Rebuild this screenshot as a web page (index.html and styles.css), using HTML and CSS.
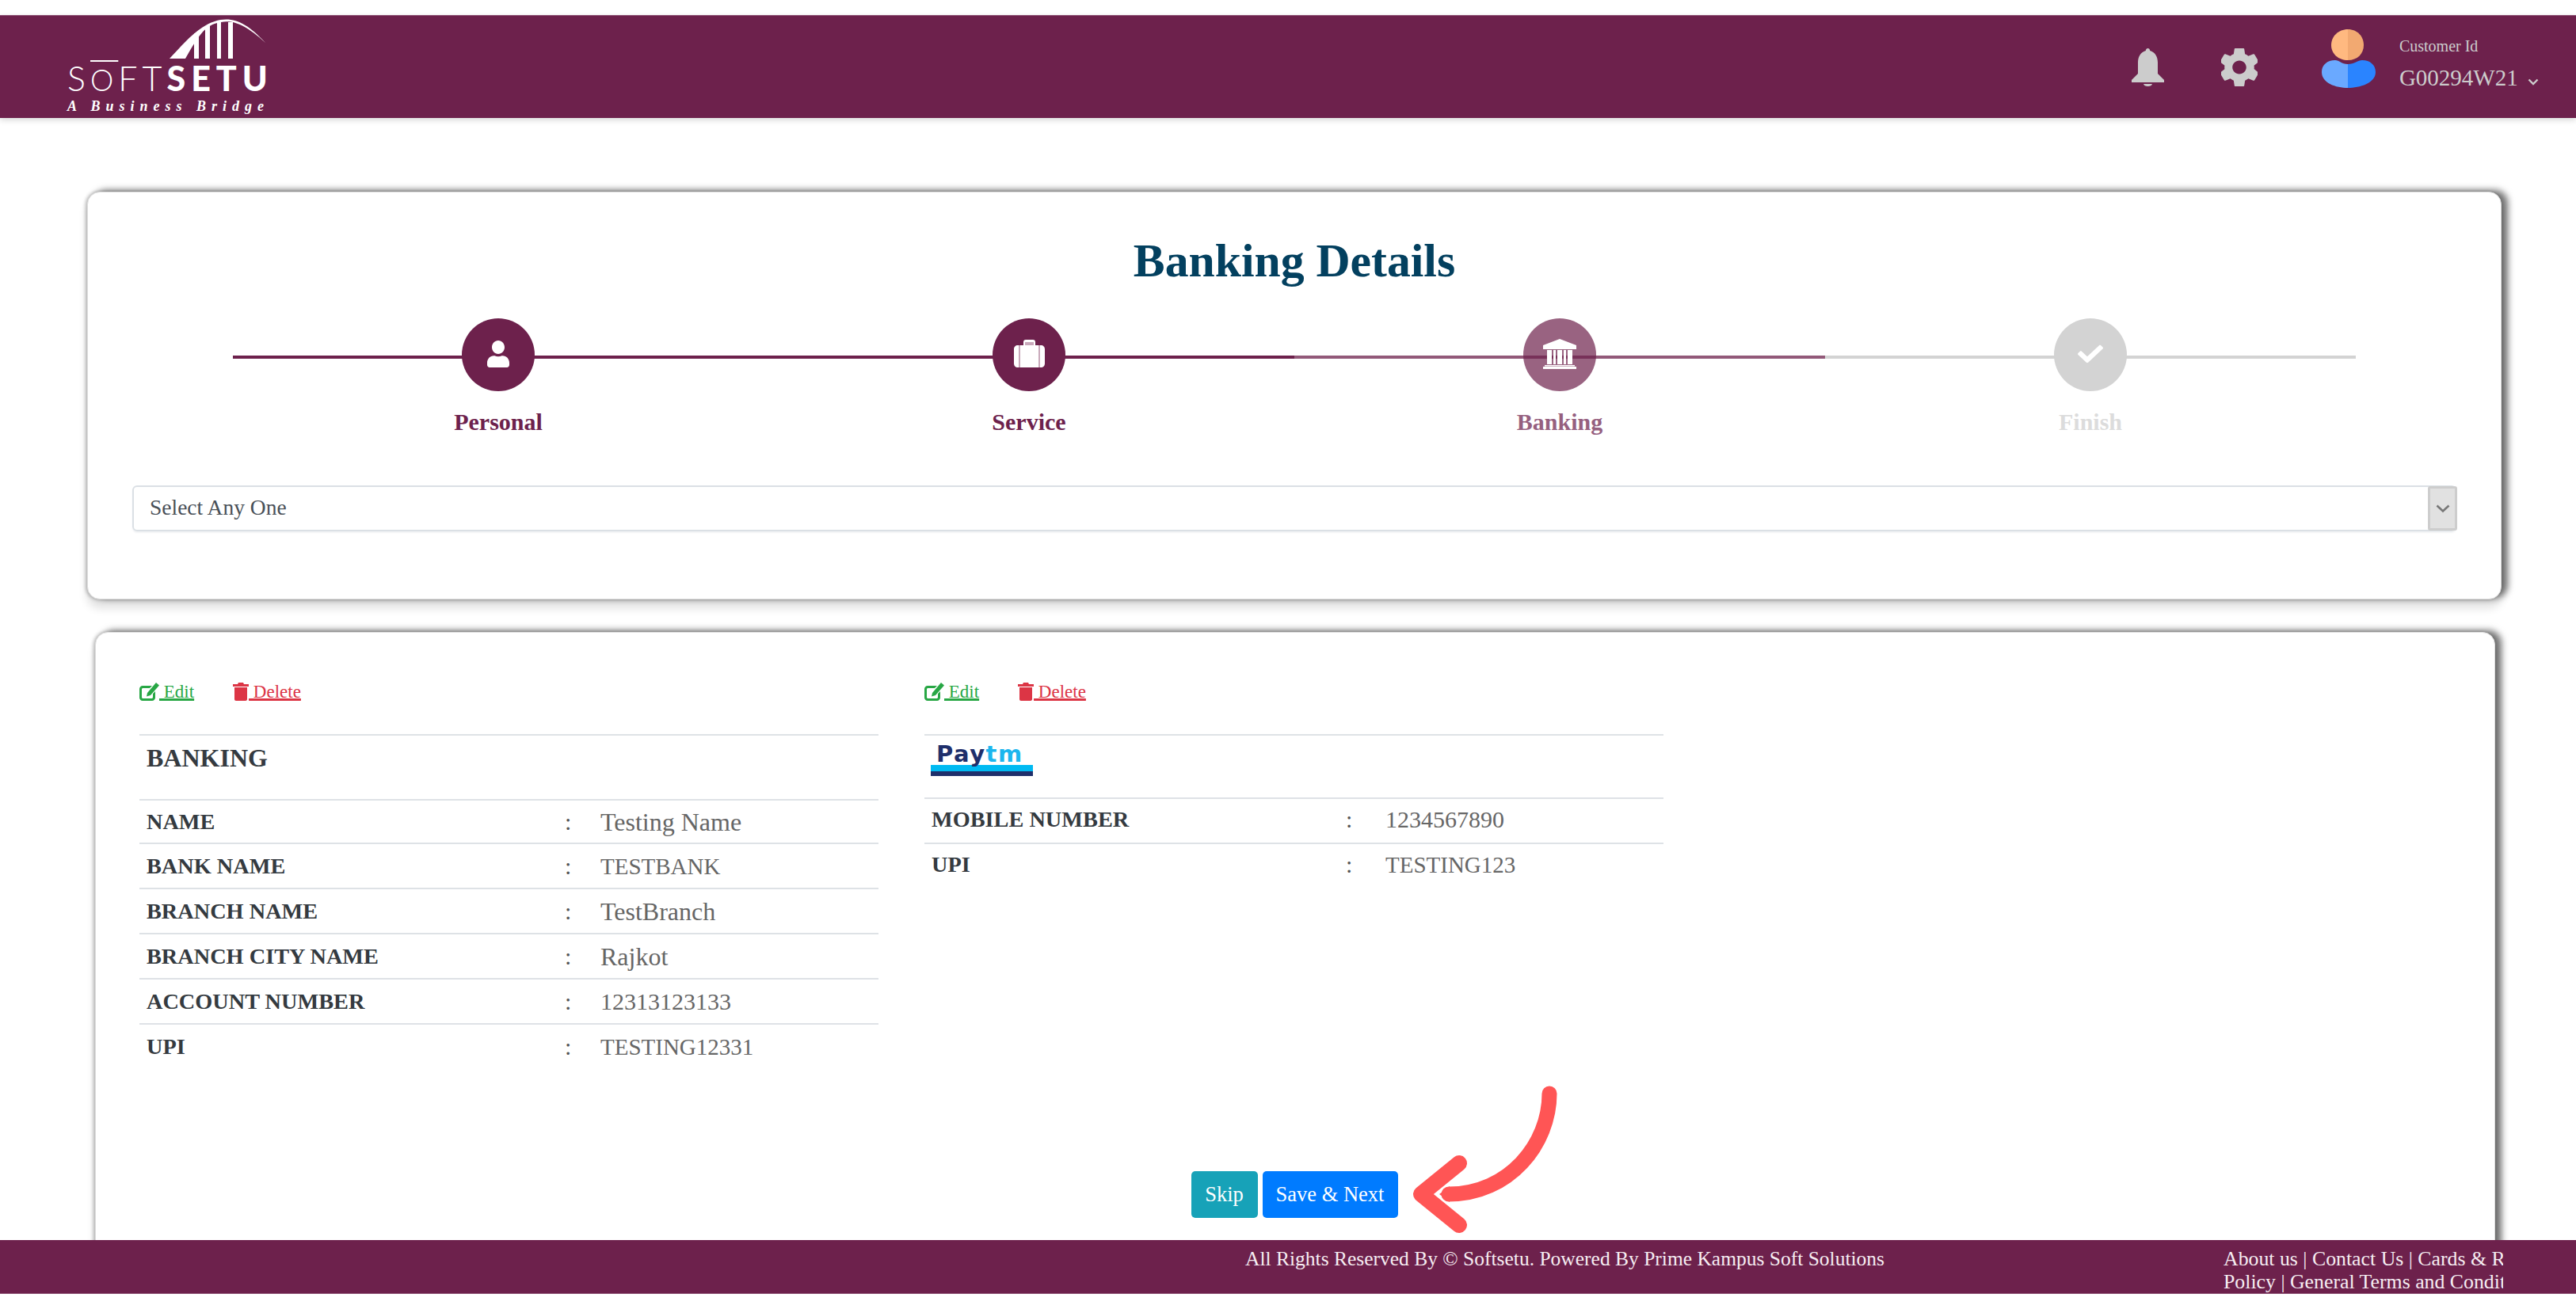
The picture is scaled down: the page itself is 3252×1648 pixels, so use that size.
FILE: index.html
```html
<!DOCTYPE html>
<html lang="en">
<head>
    <meta charset="UTF-8">
    <title>Banking Details</title>
    <link rel="stylesheet" href="styles.css">
</head>
<body>
    <header class="topbar">
        <div class="logo">
            <svg class="logo-arch" viewBox="0 0 130 54" width="130" height="54">
                <path d="M3 52 C20 34 38 12 60 5 C82 -2 100 6 124 32 C100 10 84 3 68 6 C48 9 40 22 23 52 Z"/>
                <rect x="34" y="20" width="6" height="32"/>
                <rect x="48" y="11" width="6" height="41"/>
                <rect x="63" y="6" width="5" height="46"/>
                <rect x="77" y="6" width="6" height="46"/>
            </svg>
            <div class="logo-name"><span class="logo-soft">S<span class="logo-o">O</span>FT</span><span class="logo-setu">SETU</span></div>
            <div class="logo-tag">A Business Bridge</div>
        </div>
        <div class="topbar-right">
            <svg class="bell" viewBox="0 0 41 48" width="41" height="48">
                <path d="M20.5 0c1.5 0 2.5 1.2 2.7 3C30 5 33 11 33 18v14l8 8v3H0v-3l8-8V18C8 11 11 5 17.8 3 18 1.2 19 0 20.5 0z"/>
                <path d="M15 45h11c-.5 2-2.5 3-5.5 3s-5-1-5.5-3z"/>
            </svg>
            <svg class="gear" viewBox="2.8 2 18.4 20" width="46" height="48" preserveAspectRatio="none">
                <path d="M19.43 12.98c.04-.32.07-.64.07-.98s-.03-.66-.07-.98l2.11-1.65c.19-.15.24-.42.12-.64l-2-3.46c-.12-.22-.39-.3-.61-.22l-2.49 1c-.52-.4-1.08-.73-1.69-.98l-.38-2.65C14.46 2.18 14.25 2 14 2h-4c-.25 0-.46.18-.49.42l-.38 2.65c-.61.25-1.17.59-1.69.98l-2.49-1c-.23-.09-.49 0-.61.22l-2 3.46c-.13.22-.07.49.12.64l2.11 1.65c-.04.32-.07.65-.07.98s.03.66.07.98l-2.11 1.65c-.19.15-.24.42-.12.64l2 3.46c.12.22.39.3.61.22l2.49-1c.52.4 1.08.73 1.69.98l.38 2.65c.03.24.24.42.49.42h4c.25 0 .46-.18.49-.42l.38-2.65c.61-.25 1.17-.59 1.69-.98l2.49 1c.23.09.49 0 .61-.22l2-3.46c.12-.22.07-.49-.12-.64l-2.01-1.65zM12 15.5c-1.93 0-3.5-1.57-3.5-3.5s1.57-3.5 3.5-3.5 3.5 1.57 3.5 3.5-1.57 3.5-3.5 3.5z"/>
            </svg>
            <svg class="avatar" viewBox="0 0 68 74" width="68" height="74">
                <path fill="#ffb980" d="M33 0C21 0 12 9 12 20s9 19 21 19z"/>
                <path fill="#f2a971" d="M33 0c12 0 20 9 20 20s-8 19-20 19z"/>
                <path fill="#6aa9ff" d="M33 74C18 74 0 68 0 54 0 45 7 39 17 39c5 0 8 5 16 5z"/>
                <path fill="#2a84ff" d="M33 74c15 0 35-6 35-20 0-9-7-15-17-15-5 0-10 5-18 5z"/>
            </svg>
            <div class="customer">
                <div class="customer-label">Customer Id</div>
                <div class="customer-id">G00294W21
                    <svg class="customer-caret" viewBox="0 0 14 9" width="14" height="9"><path d="M1.5 1.5L7 7l5.500-5.500" fill="none" stroke="#ccc" stroke-width="2.4"/></svg>
                </div>
            </div>
        </div>
    </header>

    <main class="content">
        <section class="card card-top">
            <h1 class="page-title">Banking Details</h1>
            <div class="steps">
                <div class="step step-done">
                    <div class="step-circle">
                        <svg viewBox="0 0 448 512" width="28" height="34" preserveAspectRatio="none"><path d="M224 256c70.7 0 128-57.3 128-128S294.7 0 224 0 96 57.3 96 128s57.3 128 128 128zm89.6 32h-16.7c-22.2 10.2-46.9 16-72.9 16s-50.6-5.8-72.9-16h-16.7C60.2 288 0 348.2 0 422.4V464c0 26.5 21.5 48 48 48h352c26.5 0 48-21.5 48-48v-41.6c0-74.2-60.2-134.4-134.4-134.4z"/></svg>
                    </div>
                    <div class="step-name">Personal</div>
                </div>
                <div class="step step-done">
                    <div class="step-circle">
                        <svg viewBox="0 0 39 35" width="39" height="35">
                            <path d="M15 0h9c2 0 3 1 3 3v4h7c3 0 5 2 5 5v18c0 3-2 5-5 5H5c-3 0-5-2-5-5V12c0-3 2-5 5-5h7V3c0-2 1-3 3-3z"/>
                            <path fill="#c9a9bb" d="M14 3h11v4H14zM6 7h2v28H6zm25 0h2v28h-2z"/>
                        </svg>
                    </div>
                    <div class="step-name">Service</div>
                </div>
                <div class="step step-active">
                    <div class="step-circle">
                        <svg viewBox="0 0 42 38" width="42" height="38"><path d="M21 0l21 8v5H0V8zM5 14h6v18H5zm8 0h3v18h-3zm5 0h6v18h-6zm8 0h3v18h-3zm5 0h6v18h-6zM2 33h38v1.500H2zM0 35h42v3H0z"/></svg>
                    </div>
                    <div class="step-name">Banking</div>
                </div>
                <div class="step step-todo">
                    <div class="step-circle">
                        <svg viewBox="0 0 512 512" width="32" height="30" preserveAspectRatio="none"><path d="M173.898 439.404l-166.4-166.4c-9.997-9.997-9.997-26.206 0-36.204l36.203-36.204c9.997-9.998 26.207-9.998 36.204 0L192 312.69 432.095 72.596c9.997-9.997 26.207-9.997 36.204 0l36.203 36.204c9.997 9.997 9.997 26.206 0 36.204l-294.4 294.401c-9.998 9.997-26.207 9.997-36.204-.001z"/></svg>
                    </div>
                    <div class="step-name">Finish</div>
                </div>
            </div>
            <div class="select-box">
                <span class="select-text">Select Any One</span>
                <span class="select-arrow">
                    <svg viewBox="0 0 18 11" width="18" height="11"><path d="M1.5 1.5L9 8.500l7.500-7" fill="none" stroke="#777" stroke-width="2.6"/></svg>
                </span>
            </div>
        </section>

        <section class="card card-list">
            <div class="accounts">
                <div class="account">
                    <div class="account-actions">
                        <a class="link-edit" href="#">
                            <svg viewBox="0 0 25 23" width="25" height="23"><path d="M4 4h12l-3 3H4.500C3.700 7 3 7.700 3 8.500v10c0 .8.700 1.500 1.500 1.500h11c.8 0 1.500-.7 1.500-1.500V14l3-3v8c0 2.200-1.800 4-4 4H4c-2.200 0-4-1.800-4-4V8c0-2.200 1.800-4 4-4zm17-4l4 3.500L14 16l-5 1.500L10 13z"/></svg><span class="link-text"> Edit</span>
                        </a>
                        <a class="link-delete" href="#">
                            <svg viewBox="0 0 20 23" width="20" height="23"><path d="M7 0h6l1 2h6v3H0V2h6zM2 6h16v15c0 1.200-.8 2-2 2H4c-1.200 0-2-.8-2-2z"/></svg><span class="link-text"> Delete</span>
                        </a>
                    </div>
                    <div class="detail-head">BANKING</div>
                    <div class="detail-row"><span class="detail-key">NAME</span><span class="detail-colon">:</span><span class="detail-val val-mixed">Testing Name</span></div>
                    <div class="detail-row"><span class="detail-key">BANK NAME</span><span class="detail-colon">:</span><span class="detail-val val-caps">TESTBANK</span></div>
                    <div class="detail-row"><span class="detail-key">BRANCH NAME</span><span class="detail-colon">:</span><span class="detail-val val-mixed">TestBranch</span></div>
                    <div class="detail-row"><span class="detail-key">BRANCH CITY NAME</span><span class="detail-colon">:</span><span class="detail-val val-mixed">Rajkot</span></div>
                    <div class="detail-row"><span class="detail-key">ACCOUNT NUMBER</span><span class="detail-colon">:</span><span class="detail-val">12313123133</span></div>
                    <div class="detail-row"><span class="detail-key">UPI</span><span class="detail-colon">:</span><span class="detail-val val-caps">TESTING12331</span></div>
                </div>
                <div class="account account-paytm">
                    <div class="account-actions">
                        <a class="link-edit" href="#">
                            <svg viewBox="0 0 25 23" width="25" height="23"><path d="M4 4h12l-3 3H4.500C3.700 7 3 7.700 3 8.500v10c0 .8.700 1.500 1.500 1.500h11c.8 0 1.500-.7 1.500-1.500V14l3-3v8c0 2.200-1.800 4-4 4H4c-2.200 0-4-1.800-4-4V8c0-2.200 1.800-4 4-4zm17-4l4 3.500L14 16l-5 1.500L10 13z"/></svg><span class="link-text"> Edit</span>
                        </a>
                        <a class="link-delete" href="#">
                            <svg viewBox="0 0 20 23" width="20" height="23"><path d="M7 0h6l1 2h6v3H0V2h6zM2 6h16v15c0 1.200-.8 2-2 2H4c-1.200 0-2-.8-2-2z"/></svg><span class="link-text"> Delete</span>
                        </a>
                    </div>
                    <div class="detail-head">
                        <div class="paytm">
                            <div class="paytm-word">Pay<span class="paytm-tm">tm</span></div>
                            <div class="paytm-bar-top"></div>
                            <div class="paytm-bar-bottom"></div>
                        </div>
                    </div>
                    <div class="detail-row"><span class="detail-key">MOBILE NUMBER</span><span class="detail-colon">:</span><span class="detail-val">1234567890</span></div>
                    <div class="detail-row"><span class="detail-key">UPI</span><span class="detail-colon">:</span><span class="detail-val val-caps">TESTING123</span></div>
                </div>
            </div>
            <div class="form-buttons">
                <div class="form-buttons-inner">
                    <button class="btn btn-skip">Skip</button>
                    <button class="btn btn-save">Save &amp; Next</button>
                    <svg class="pointer" viewBox="1770 1365 200 195" width="200" height="195">
                        <path d="M1956 1381C1956 1445 1905 1508 1829 1508" fill="none" stroke="#ff5555" stroke-width="19" stroke-linecap="round"/>
                        <path d="M1817 1508l13-10v20z" fill="#ff5555"/>
                        <path d="M1842 1469L1794 1508L1842 1547" fill="none" stroke="#ff5555" stroke-width="20" stroke-linecap="round" stroke-linejoin="round"/>
                    </svg>
                </div>
            </div>
        </section>
    </main>

    <footer class="footer">
        <div class="footer-copy">All Rights Reserved By © Softsetu. Powered By Prime Kampus Soft Solutions</div>
        <div class="footer-links">
            <div>About us | Contact Us | Cards &amp; Refund</div>
            <div>Policy | General Terms and Conditions</div>
        </div>
    </footer>
</body>
</html>
```

FILE: styles.css
```css
*{
    padding: 0;
    margin: 0;
    box-sizing: border-box;
}
html,body{
    height: 1648px;
    overflow: hidden;
    background: #fff;
}
body{
    display: flex;
    flex-direction: column;
    font-family: "Liberation Serif", serif;
    padding: 19px 0 14px;
}

/* top bar */
.topbar{
    height: 130px;
    flex: none;
    display: flex;
    justify-content: space-between;
    background: #6d214c;
    border-top: 1px solid #8b4f72;
    box-shadow: 0 3px 7px rgba(0,0,0,.14);
    position: relative;
    z-index: 2;
}
.logo{
    margin-left: 85px;
    width: 256px;
    color: #fff;
    font-family: "Lato", sans-serif;
}
.logo-arch{
    display: block;
    margin: 2px 0 0 126px;
    fill: #fff;
}
.logo-name{
    display: flex;
    height: 36px;
    margin-top: 5px;
    font-size: 43px;
    line-height: 36px;
    white-space: nowrap;
}
.logo-soft{
    font-weight: 300;
    letter-spacing: 6px;
    width: 127px;
}
.logo-o{
    font-size: 37px;
    text-decoration: overline;
    text-decoration-thickness: 2px;
}
.logo-setu{
    font-weight: 900;
    letter-spacing: 7px;
}
.logo-tag{
    margin-top: 8px;
    font-family: "Liberation Serif", serif;
    font-style: italic;
    font-weight: bold;
    font-size: 18px;
    line-height: 18px;
    letter-spacing: 7px;
    white-space: nowrap;
}
.topbar-right{
    display: flex;
    align-items: center;
    padding-right: 47px;
}
.bell,.gear{
    fill: #ccc;
}
.gear{
    margin-left: 72px;
}
.avatar{
    margin: -22px 0 0 81px;
}
.customer{
    margin: -8px 0 0 30px;
    color: #ccc;
}
.customer-label{
    font-size: 20px;
    line-height: 24px;
    margin-bottom: 10px;
}
.customer-id{
    font-size: 29px;
    line-height: 36px;
    white-space: nowrap;
}
.customer-caret{
    margin-left: 5px;
}

/* cards */
.content{
    flex: 1;
    overflow: hidden;
    padding-top: 93px;
}
.card{
    background: #fff;
    border: 1px solid #ddd;
    border-radius: 16px;
    box-shadow: 8px -2px 8px rgba(0,0,0,.55), 0 11px 12px rgba(0,0,0,.12), -2px 0 4px rgba(0,0,0,.25);
}
.card-top{
    margin: 0 94px 0 110px;
    height: 515px;
    padding: 52px 56px 0;
}
.card-list{
    margin: 41px 102px 0 120px;
    height: 800px;
    padding-top: 59px;
}
.page-title{
    text-align: center;
    font-size: 59.700px;
    line-height: 68px;
    color: #03405f;
}

/* stepper */
.steps{
    width: 2680px;
    margin: 39px auto 0;
    display: grid;
    grid-template-columns: repeat(4, 670px);
}
.step{
    position: relative;
    display: flex;
    flex-direction: column;
    align-items: center;
}
.step::before{
    content: "";
    position: absolute;
    left: 0;
    right: 0;
    top: 47px;
    height: 4px;
    background: #6d214c;
}
.step-circle{
    position: relative;
    width: 92px;
    height: 92px;
    padding-bottom: 3px;
    border-radius: 50%;
    display: flex;
    align-items: center;
    justify-content: center;
    background: #6d214c;
    fill: #fff;
}
.step-name{
    margin-top: 21px;
    font-size: 30px;
    line-height: 36px;
    font-weight: bold;
    color: #6d214c;
}
.step-active::before{
    background: rgba(109,33,76,.75);
}
.step-active .step-circle{
    background: rgba(109,33,76,.7);
}
.step-active .step-name{
    color: #96607f;
}
.step-todo::before{
    background: #d3d3d3;
}
.step-todo .step-circle{
    background: #d3d3d3;
}
.step-todo .step-name{
    color: #dcdcdc;
}

/* select */
.select-box{
    height: 58px;
    margin-top: 62px;
    display: flex;
    justify-content: space-between;
    border: 2px solid #dbe0e5;
    border-radius: 6px;
    box-shadow: 0 2px 2px #f2f3f5;
}
.select-text{
    padding-left: 20px;
    font-size: 27.500px;
    line-height: 52px;
    color: #495057;
}
.select-arrow{
    width: 37px;
    margin: -1px -3px -1px 0;
    display: flex;
    align-items: center;
    justify-content: center;
    background: #e1e1e1;
    border: 3px solid #cdcdcd;
    border-radius: 3px;
}

/* saved accounts */
.accounts{
    display: flex;
    gap: 58px;
    height: 621px;
    padding-left: 55px;
}
.account{
    width: 933px;
}
.account-actions{
    display: flex;
    gap: 49px;
    height: 69px;
    padding-top: 2px;
    align-items: flex-start;
}
.account-actions a{
    display: flex;
    align-items: flex-start;
    font-size: 23px;
    line-height: 24px;
}
.account-actions svg{
    flex: none;
    margin-top: 2px;
}
.link-text{
    margin-top: 2px;
    white-space: pre;
    text-decoration: underline;
    text-decoration-thickness: 2px;
}
.link-edit{
    color: #28a745;
    fill: #28a745;
}
.link-delete{
    color: #dc3545;
    fill: #dc3545;
}
.detail-head{
    height: 82px;
    border-top: 2px solid #dee2e6;
    padding: 9px 0 0 9px;
    font-size: 32px;
    line-height: 38px;
    font-weight: bold;
    color: #343a40;
}
.detail-row{
    display: grid;
    grid-template-columns: 537px 45px 1fr;
    align-items: center;
    height: 57px;
    border-top: 2px solid #dee2e6;
    font-size: 30px;
    line-height: 36px;
}
.detail-head + .detail-row{
    height: 55px;
}
.detail-key{
    padding-left: 9px;
    font-size: 28.300px;
    font-weight: bold;
    color: #343a40;
}
.detail-colon{
    color: #555;
}
.detail-val{
    color: #666;
}
.val-caps{
    font-size: 29px;
}
.val-mixed{
    font-size: 32px;
}
.account-paytm .detail-head{
    height: 80px;
}
.account-paytm .detail-row{
    grid-template-columns: 532px 50px 1fr;
    height: 57px;
    padding-bottom: 3px;
}

/* paytm mark */
.paytm{
    width: 129px;
    margin: 0 0 0 -1px;
}
.paytm-word{
    height: 28px;
    padding-left: 7px;
    font-family: "DejaVu Sans", sans-serif;
    font-weight: bold;
    font-size: 29px;
    line-height: 28px;
    letter-spacing: 1.500px;
    white-space: nowrap;
    color: #1f2f6b;
}
.paytm-tm{
    color: #1cb6ee;
}
.paytm-bar-top{
    height: 8px;
    background: #00baf2;
}
.paytm-bar-bottom{
    height: 6px;
    background: #1f2f6b;
}

/* buttons */
.form-buttons{
    display: flex;
    justify-content: center;
}
.form-buttons-inner{
    position: relative;
    display: flex;
    gap: 6px;
    margin-left: -2px;
}
.btn{
    height: 59px;
    border: 0;
    border-radius: 5px;
    color: #fff;
    font-family: inherit;
    font-size: 26.500px;
}
.btn-skip{
    width: 84px;
    background: #17a2b8;
}
.btn-save{
    width: 171px;
    background: #007bff;
}
.pointer{
    position: absolute;
    left: calc(100% + 5px);
    top: -114px;
}

/* footer */
.footer{
    position: relative;
    z-index: 2;
    height: 68px;
    flex: none;
    display: flex;
    padding: 9px 0 0 1572px;
    background: #6d214c;
    border-bottom: 1px solid #8b4f72;
    color: #f6edf2;
    font-size: 25.500px;
    line-height: 29px;
}
.footer-copy{
    width: 1235px;
    flex: none;
    white-space: nowrap;
}
.footer-links{
    width: 353px;
    flex: none;
    overflow: hidden;
    white-space: nowrap;
    font-size: 25.800px;
}
```
